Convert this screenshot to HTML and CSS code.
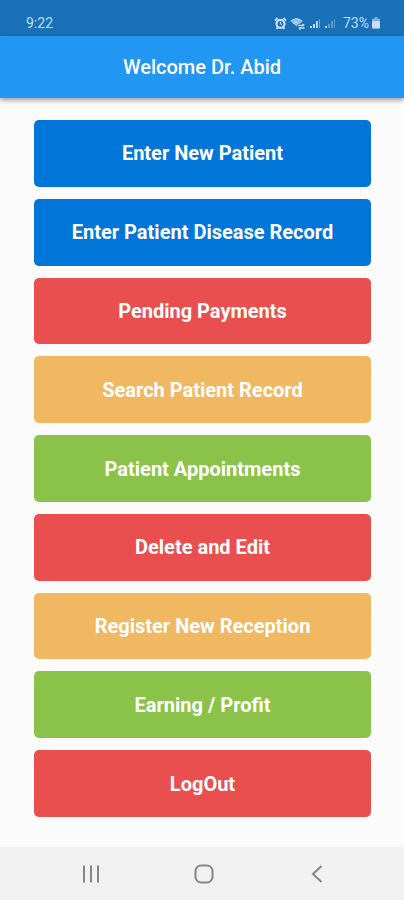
FILE: index.html
```html
<!DOCTYPE html>
<html lang="en">

<head>
    <meta charset="UTF-8">
    <meta name="viewport" content="width=device-width, initial-scale=1.0">
    <title>Welcome Dr. Abid</title>

    <link rel="stylesheet" href="styles.css">

</head>

<body>

    <div class="status">
        <span class="time">9:22</span>

        <div class="icons">
            <svg class="icon" viewBox="0 0 13 13" width="13" height="13" aria-hidden="true">
                <path d="M1 3.6 3.6 1M12 3.6 9.4 1M2.6 12l1.2-1.6M10.4 12 9.2 10.4" stroke="currentColor" stroke-width="2" />
                <circle cx="6.5" cy="6.8" r="4" fill="none" stroke="currentColor" stroke-width="2.2" />
                <path d="M6.5 4.8v2.4H8" fill="none" stroke="currentColor" />
            </svg>
            <svg class="icon" viewBox="0 0 16 13" width="16" height="13" aria-hidden="true">
                <path d="M.5 4Q6.5-1 12.5 4L10.5 6.5 9 6 6.5 9.5Z" fill="currentColor" opacity=".7" />
                <path d="M.8 4Q6.5-.5 12.2 4M3 6.5Q6.5 4 9.5 6.5" fill="none" stroke="currentColor" />
                <path d="M8 8.5h6M12.5 7l1.8 1.5M14.5 11H9M10.5 12.5 8.8 11" fill="none" stroke="currentColor" stroke-width="1.5" />
            </svg>
            <svg class="icon" viewBox="0 0 12 12" width="12" height="12" aria-hidden="true">
                <path d="M1 9h2v2H1zM4 7h2v4H4z" fill="currentColor" />
                <path d="M7 4h2v7H7z" fill="currentColor" opacity=".9" />
                <path d="M10 2h1v9h-1z" fill="currentColor" opacity=".5" />
            </svg>
            <svg class="icon" viewBox="0 0 12 12" width="12" height="12" aria-hidden="true">
                <path d="M1 9h2v2H1z" fill="currentColor" opacity=".9" />
                <path d="M4 7h2v4H4zM7 4h2v7H7zM10 2h1v9h-1z" fill="currentColor" opacity=".4" />
            </svg>
            <span class="percent">73%</span>
            <svg class="icon" viewBox="0 0 8 12" width="8" height="12" aria-hidden="true">
                <path d="M2.5 0h3v1.5h-3z" fill="currentColor" opacity=".6" />
                <rect y="1.5" width="8" height="10" rx="1" fill="currentColor" opacity=".6" />
                <rect y="4" width="8" height="7.5" rx="1" fill="currentColor" />
            </svg>
        </div>
    </div>

    <header>
        <h1>Welcome Dr. Abid</h1>
    </header>

    <main>
        <button type="button" class="btn blue">Enter New Patient</button>
        <button type="button" class="btn blue">Enter Patient Disease Record</button>
        <button type="button" class="btn red">Pending Payments</button>
        <button type="button" class="btn orange">Search Patient Record</button>
        <button type="button" class="btn green">Patient Appointments</button>
        <button type="button" class="btn red">Delete and Edit</button>
        <button type="button" class="btn orange">Register New Reception</button>
        <button type="button" class="btn green">Earning / Profit</button>
        <button type="button" class="btn red">LogOut</button>
    </main>

    <nav>
        <button type="button" class="key" aria-label="Recent apps">
            <svg viewBox="0 0 20 20" width="20" height="20">
                <path d="M3 1.5v17M10 1.5v17M17 1.5v17" />
            </svg>
        </button>
        <button type="button" class="key" aria-label="Home">
            <svg viewBox="0 0 20 20" width="20" height="20">
                <rect x="1.5" y="1.5" width="17" height="17" rx="5.5" />
            </svg>
        </button>
        <button type="button" class="key" aria-label="Back">
            <svg viewBox="0 0 20 20" width="20" height="20">
                <path d="M14.5 2 6 10l8.5 8" />
            </svg>
        </button>
    </nav>

</body>

</html>
```
FILE: styles.css
```css
body {
    margin: 0;
    min-height: 100vh;
    display: flex;
    flex-direction: column;
    background-color: #fbfbfb;
    font-family: Roboto, "Liberation Sans", sans-serif;
}

.status {
    display: flex;
    justify-content: space-between;
    align-items: center;
    height: 26px;
    padding: 10px 24px 0 26px;
    background-color: #1a70b7;
    color: #c3def5;
    font-size: 14px;
}

.icons {
    display: flex;
    align-items: center;
    gap: 3px;
}

.icon {
    display: block;
}

.percent {
    margin-left: 4px;
}

header {
    padding: 19px 0;
    background-color: #2196f3;
    box-shadow: 0 2px 5px rgba(0, 0, 0, 0.4);
    color: #fff;
    text-align: center;
}

h1 {
    margin: 0;
    font-size: 20px;
    font-weight: 500;
    line-height: 24px;
}

main {
    flex: 1;
    display: flex;
    flex-direction: column;
    gap: 12px;
    padding: 22px 33px 30px 34px;
}

.btn {
    flex: 1;
    min-height: 48px;
    padding: 0;
    border: none;
    border-radius: 5px;
    color: #fff;
    font-family: inherit;
    font-size: 20px;
    font-weight: 700;
}

.blue {
    background-color: #0275d8;
}

.red {
    background-color: #e94f4f;
}

.orange {
    background-color: #f0b860;
}

.green {
    background-color: #8bc34a;
}

nav {
    display: flex;
    height: 53px;
    padding: 0 31px 0 35px;
    background-color: #f1f1f1;
}

.key {
    flex: 1;
    display: flex;
    justify-content: center;
    align-items: center;
    padding: 0;
    border: none;
    background: none;
}

.key svg {
    fill: none;
    stroke: #858585;
    stroke-width: 2;
}
```
